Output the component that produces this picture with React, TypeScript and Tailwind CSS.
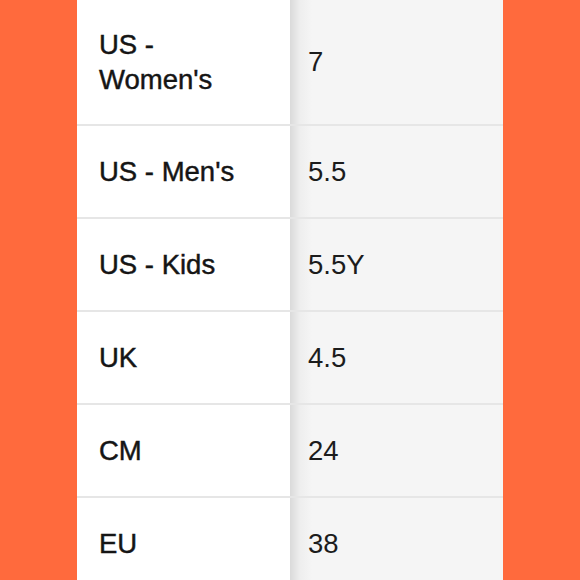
import React from "react";

const rows: { label: string[]; value: string }[] = [
  { label: ["US -", "Women's"], value: "7" },
  { label: ["US - Men's"], value: "5.5" },
  { label: ["US - Kids"], value: "5.5Y" },
  { label: ["UK"], value: "4.5" },
  { label: ["CM"], value: "24" },
  { label: ["EU"], value: "38" },
];

export default function App() {
  return (
    <div className="w-[580px] h-[580px] overflow-hidden bg-[#ff6a3d] flex justify-center" style={{ fontFamily: '"Liberation Sans", Arial, sans-serif' }}>
      <div className="w-[426px] flex flex-col">
        {rows.map((r, i) => (
          <div
            key={i}
            className={`grid grid-cols-[213px_213px] shrink-0 ${i === 0 ? "h-[124px]" : "h-[93px] border-t-2 border-[#e6e6e6]"}`}
          >
            <div className="bg-white flex flex-col justify-center pl-[22px] text-[27.5px] leading-[35px] text-[#151515] [-webkit-text-stroke:0.45px_#151515]">
              {r.label.map((l, j) => (
                <span key={j}>{l}</span>
              ))}
            </div>
            <div className="bg-[linear-gradient(to_right,#dadada,#eeeeee_10px,#f5f5f5_22px)] flex items-center pl-[18px] text-[27.5px] text-[#1c1c1c]">
              {r.value}
            </div>
          </div>
        ))}
      </div>
    </div>
  );
}
